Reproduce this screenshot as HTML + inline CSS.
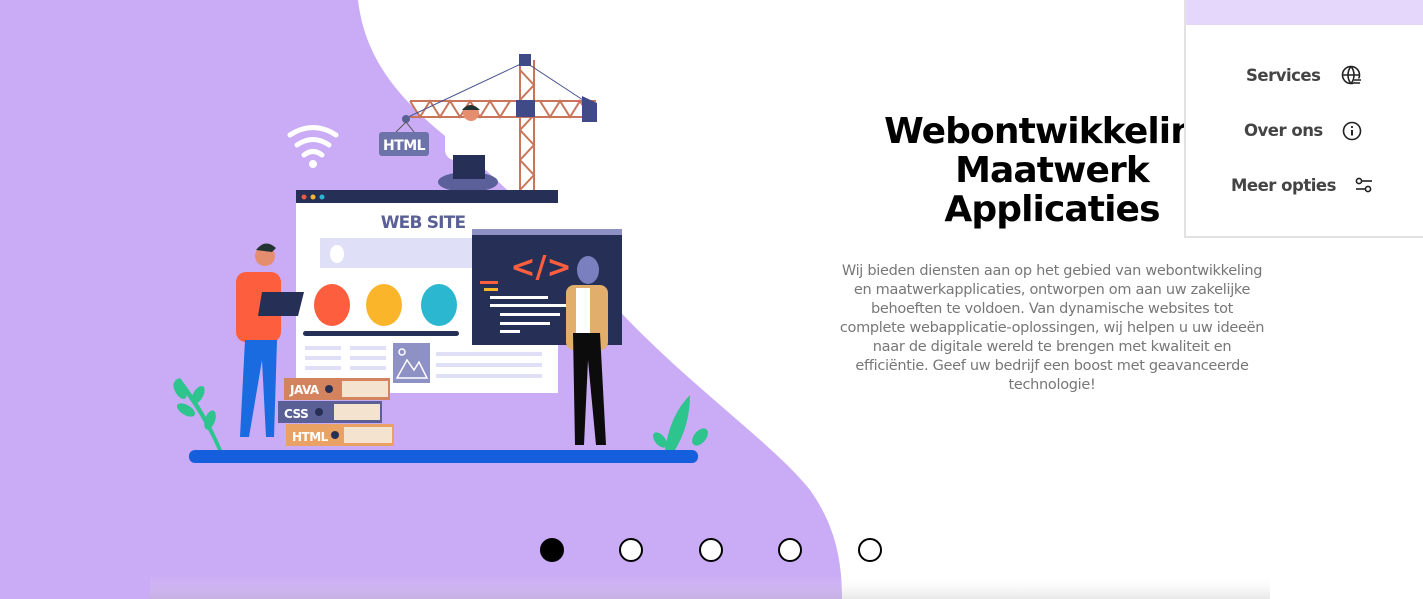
<!DOCTYPE html>
<html><head><meta charset="utf-8"><style>
html,body{margin:0;padding:0;width:1423px;height:599px;overflow:hidden;background:#fff;position:relative;font-family:"DejaVu Sans","Liberation Sans",sans-serif}
#bg{position:absolute;left:0;top:0}
h1{position:absolute;left:752px;width:600px;top:112px;margin:0;text-align:center;font-family:"DejaVu Sans",sans-serif;font-weight:bold;font-size:36px;line-height:39px;letter-spacing:-0.9px;color:#000}
p.t{position:absolute;left:822px;width:460px;top:262px;margin:0;text-align:center;font-family:"DejaVu Sans",sans-serif;font-size:14.5px;line-height:19px;letter-spacing:-0.3px;color:#777}
#menu{position:absolute;left:1184px;top:0;width:239px;height:238px;background:#fff;border-left:2px solid #e2e2e2;border-bottom:2px solid #e2e2e2;box-sizing:border-box}
#menu .hd{height:25px;background:#e5d7fb}
.mi{position:absolute;font-family:"DejaVu Sans",sans-serif;font-weight:bold;font-size:16.5px;letter-spacing:-0.5px;color:#444}
.dot{position:absolute;top:538px;width:24px;height:24px;border:2px solid #000;border-radius:50%;box-sizing:border-box;background:#fff}
</style></head><body>
<svg id="bg" width="1423" height="599" viewBox="0 0 1423 599">
<defs><linearGradient id="sh" x1="0" y1="0" x2="0" y2="1"><stop offset="0" stop-color="#fff" stop-opacity="0"/><stop offset="1" stop-color="#bbb" stop-opacity="0.35"/></linearGradient></defs>
<path d="M0 0 H358 C365 60 400 100 450 140 C500 180 540 220 600 290 C680 380 770 440 810 490 C835 525 842 560 842 599 H0 Z" fill="#caabf5"/>
<rect x="150" y="575" width="1120" height="24" fill="url(#sh)"/>
<g stroke="#c9755a" stroke-width="2" fill="none">
<path d="M520 60 V190 M534 60 V190"/>
<path d="M520 70 L534 85 L520 100 L534 115 L520 130 L534 145 L520 160 L534 175 L520 190"/>
<path d="M410 101 H596 M410 117 H596"/>
<path d="M410 101 L420 117 L430 101 L440 117 L450 101 L460 117 L470 101 L480 117 L490 101 L500 117 L510 101 M540 101 L550 117 L560 101 L570 117 L580 101 L590 117"/>
</g>
<path d="M406 118 L525 62 L583 100" stroke="#4a5590" stroke-width="1" fill="none"/>
<rect x="519" y="54" width="12" height="12" fill="#3f4a87"/>
<rect x="516" y="100" width="19" height="17" fill="#3f4a87"/>
<path d="M582 96 L597 103 V122 H582 Z" fill="#3f4a87"/>
<circle cx="406" cy="119" r="4" fill="#5a6090"/>
<path d="M406 122 L396 132 M406 122 L414 132" stroke="#555" stroke-width="1"/>
<rect x="379" y="132" width="50" height="24" rx="3" fill="#6c73a8"/>
<text x="404" y="150" text-anchor="middle" font-family="DejaVu Sans" font-weight="bold" font-size="14" fill="#fff" letter-spacing="-0.5">HTML</text>
<g stroke="#fff" stroke-width="5" fill="none" stroke-linecap="round"><path d="M290 135 Q313 120 336 135"/><path d="M297 145 Q313 134 329 145"/><path d="M304 155 Q313 148 322 155"/></g>
<circle cx="313" cy="164" r="4" fill="#fff"/>
<circle cx="471" cy="113" r="8" fill="#e58e6f"/><path d="M462 110 Q470 100 480 110 Z" fill="#233"/>
<rect x="445" y="125" width="48" height="35" rx="10" fill="#fff"/>
<ellipse cx="468" cy="182" rx="30" ry="10" fill="#5b5f9a"/>
<rect x="453" y="155" width="32" height="24" fill="#263056"/>
<rect x="296" y="190" width="262" height="13" fill="#263056"/>
<circle cx="304" cy="197" r="2.5" fill="#f05a3c"/><circle cx="313" cy="197" r="2.5" fill="#fbb52b"/><circle cx="322" cy="197" r="2.5" fill="#2cb7d0"/>
<rect x="296" y="203" width="262" height="190" fill="#fff"/>
<text x="423" y="228" text-anchor="middle" font-family="DejaVu Sans" font-weight="bold" font-size="17" fill="#5a5f95" letter-spacing="-0.8">WEB SITE</text>
<rect x="320" y="238" width="160" height="30" fill="#dfe0f8"/>
<ellipse cx="337" cy="254" rx="7" ry="9" fill="#fff"/>
<ellipse cx="332" cy="305" rx="18" ry="21" fill="#fd5e3d"/>
<ellipse cx="384" cy="305" rx="18" ry="21" fill="#fbb52b"/>
<ellipse cx="439" cy="305" rx="18" ry="21" fill="#2cb7d0"/>
<rect x="303" y="331" width="156" height="5" rx="2.5" fill="#263056"/>
<g fill="#dfe0f8"><rect x="305" y="346" width="36" height="4"/><rect x="305" y="356" width="36" height="4"/><rect x="305" y="366" width="36" height="4"/><rect x="350" y="346" width="36" height="4"/><rect x="350" y="356" width="36" height="4"/><rect x="350" y="366" width="36" height="4"/><rect x="436" y="352" width="106" height="4"/><rect x="436" y="363" width="106" height="4"/><rect x="436" y="374" width="106" height="4"/></g>
<rect x="393" y="343" width="37" height="40" fill="#8d91c4"/>
<path d="M397 378 L407 360 L414 370 L419 362 L427 378 Z" fill="none" stroke="#fff" stroke-width="1.5"/><circle cx="402" cy="352" r="3" fill="none" stroke="#fff" stroke-width="1.5"/>
<rect x="472" y="229" width="150" height="6" fill="#8d91c4"/>
<rect x="472" y="235" width="150" height="110" fill="#263056"/>
<text x="541" y="277" text-anchor="middle" font-family="DejaVu Sans" font-weight="bold" font-size="30" fill="#fd5e3d">&lt;/&gt;</text>
<rect x="480" y="281" width="18" height="3" fill="#fd5e3d"/><rect x="484" y="288" width="14" height="3" fill="#fbb52b"/>
<g fill="#fff"><rect x="490" y="296" width="58" height="3"/><rect x="490" y="304" width="90" height="3"/><rect x="500" y="313" width="60" height="3"/><rect x="500" y="322" width="50" height="3"/><rect x="500" y="330" width="20" height="3"/></g>
<ellipse cx="588" cy="270" rx="11" ry="14" fill="#7a7fc0"/>
<rect x="566" y="285" width="42" height="65" rx="8" fill="#e2ae6c"/>
<rect x="576" y="288" width="14" height="45" fill="#fff"/>
<path d="M573 333 H600 L606 445 H596 L588 360 L584 445 H575 Z" fill="#0c0c0c"/>
<circle cx="265" cy="256" r="10" fill="#e58e6f"/><path d="M256 250 Q265 238 276 248 L272 252 Z" fill="#233"/>
<rect x="236" y="272" width="45" height="70" rx="10" fill="#fd5e3d"/>
<path d="M245 340 H277 L274 437 H266 L262 360 L249 437 H240 Z" fill="#1a6be0"/>
<path d="M262 292 H304 L298 316 H258 Z" fill="#263056"/>
<rect x="284" y="378" width="106" height="22" fill="#d3835d"/><rect x="342" y="381" width="46" height="16" fill="#f4e4cf"/>
<rect x="278" y="401" width="104" height="22" fill="#5a5f95"/><rect x="334" y="404" width="46" height="16" fill="#f4e4cf"/>
<rect x="286" y="424" width="108" height="22" fill="#eaa164"/><rect x="344" y="427" width="48" height="16" fill="#f4e4cf"/>
<g font-family="DejaVu Sans" font-weight="bold" font-size="12" fill="#fff" letter-spacing="-0.5"><text x="290" y="394">JAVA</text><text x="284" y="418">CSS</text><text x="292" y="441">HTML</text></g>
<g fill="#263056"><circle cx="329" cy="389" r="4"/><circle cx="319" cy="412" r="4"/><circle cx="335" cy="435" r="4"/></g>
<g fill="#2ec48e"><path d="M218 450 Q200 410 175 380 L180 378 Q205 410 222 450 Z"/><ellipse cx="180" cy="390" rx="5" ry="10" transform="rotate(-30 180 390)"/><ellipse cx="198" cy="395" rx="5" ry="10" transform="rotate(30 198 395)"/><ellipse cx="186" cy="410" rx="5" ry="10" transform="rotate(-60 186 410)"/><ellipse cx="210" cy="420" rx="5" ry="10" transform="rotate(20 210 420)"/>
<path d="M665 450 Q670 415 690 395 Q690 425 675 450 Z"/><ellipse cx="700" cy="437" rx="6" ry="10" transform="rotate(40 700 437)"/><ellipse cx="660" cy="440" rx="5" ry="9" transform="rotate(-40 660 440)"/></g>
<rect x="189" y="450" width="509" height="13" rx="6" fill="#165fdc"/>
</svg>
<h1>Webontwikkeling<br>Maatwerk<br>Applicaties</h1>
<p class="t">Wij bieden diensten aan op het gebied van webontwikkeling<br>en maatwerkapplicaties, ontworpen om aan uw zakelijke<br>behoeften te voldoen. Van dynamische websites tot<br>complete webapplicatie-oplossingen, wij helpen u uw ideeën<br>naar de digitale wereld te brengen met kwaliteit en<br>efficiëntie. Geef uw bedrijf een boost met geavanceerde<br>technologie!</p>
<div id="menu"><div class="hd"></div>
<div class="mi" style="left:60px;top:66px">Services</div>
<div class="mi" style="left:58px;top:121px">Over ons</div>
<div class="mi" style="left:45px;top:176px">Meer opties</div>
<svg style="position:absolute;left:155px;top:65px" width="22" height="22" viewBox="0 0 22 22" fill="none" stroke="#222" stroke-width="1.6"><circle cx="10" cy="10" r="8.5"/><path d="M1.5 10H18.5M10 1.5C6 6 6 14 10 18.5M10 1.5C14 6 14 14 10 18.5"/><path d="M13 15H20M14 18H20" stroke="#fff" stroke-width="3"/><path d="M13 15H20M14 18H19"/></svg>
<svg style="position:absolute;left:155px;top:120px" width="22" height="22" viewBox="0 0 22 22" fill="none" stroke="#222" stroke-width="1.6"><circle cx="11" cy="11" r="8.5"/><path d="M11 10V15.5" stroke-width="2"/><circle cx="11" cy="7" r="1.1" fill="#222" stroke="none"/></svg>
<svg style="position:absolute;left:167px;top:175px" width="22" height="22" viewBox="0 0 22 22" fill="none" stroke="#222" stroke-width="1.6"><circle cx="6" cy="6" r="2.6"/><path d="M8.6 6H19"/><circle cx="15" cy="14" r="2.6"/><path d="M3 14H12.4"/></svg>
</div>
<div class="dot" style="left:540px;background:#000"></div>
<div class="dot" style="left:619px"></div>
<div class="dot" style="left:699px"></div>
<div class="dot" style="left:778px"></div>
<div class="dot" style="left:858px"></div>
</body></html>
